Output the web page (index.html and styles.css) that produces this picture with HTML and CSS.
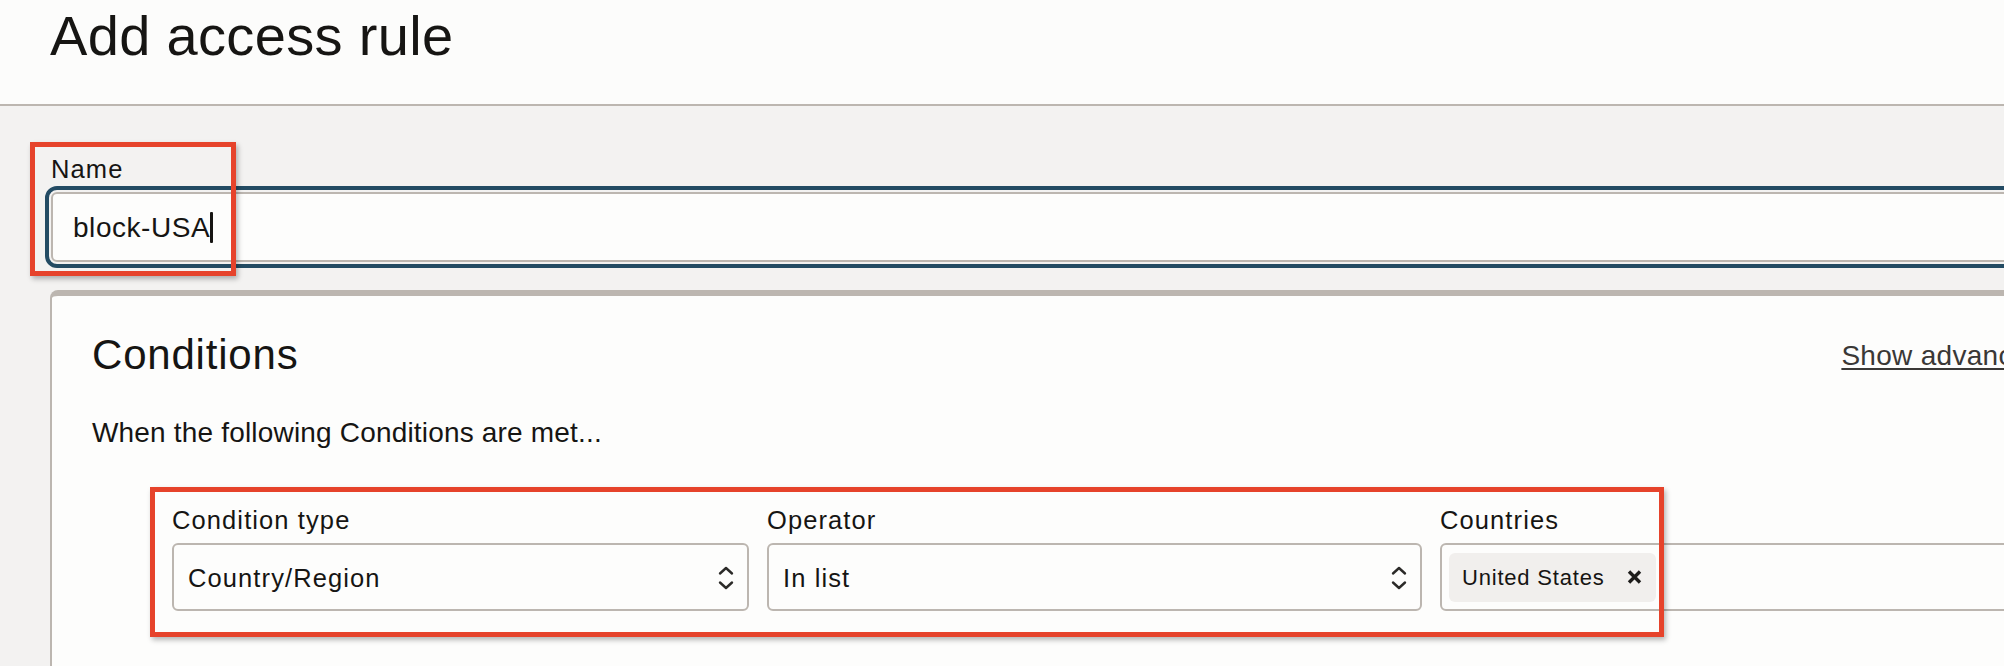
FILE: index.html
```html
<!DOCTYPE html>
<html lang="en">
<head>
<meta charset="utf-8">
<title>Add access rule</title>
<link rel="stylesheet" href="styles.css">
</head>
<body>
<div class="page">
  <header class="page-header">
    <h1 class="page-title">Add access rule</h1>
  </header>
  <main class="content">
    <div class="field name-field">
      <label class="field-label">Name</label>
      <div class="text-input is-focused"><span class="input-value">block-USA</span><span class="caret"></span></div>
    </div>

    <section class="panel">
      <div class="panel-head">
        <h2 class="panel-title">Conditions</h2>
        <a class="panel-link" href="#">Show advanced options</a>
      </div>
      <p class="panel-intro">When the following Conditions are met...</p>

      <div class="condition-row">
        <div class="field">
          <label class="field-label">Condition type</label>
          <div class="select">
            <span class="select-value">Country/Region</span>
            <svg class="select-arrows" width="16" height="24" viewBox="0 0 16 24" aria-hidden="true">
              <path d="M2 7.5 L8 2 L14 7.5" fill="none" stroke="#2b2a28" stroke-width="2.4" stroke-linecap="round" stroke-linejoin="round"/>
              <path d="M2 16.5 L8 22 L14 16.5" fill="none" stroke="#2b2a28" stroke-width="2.4" stroke-linecap="round" stroke-linejoin="round"/>
            </svg>
          </div>
        </div>
        <div class="field">
          <label class="field-label">Operator</label>
          <div class="select">
            <span class="select-value">In list</span>
            <svg class="select-arrows" width="16" height="24" viewBox="0 0 16 24" aria-hidden="true">
              <path d="M2 7.5 L8 2 L14 7.5" fill="none" stroke="#2b2a28" stroke-width="2.4" stroke-linecap="round" stroke-linejoin="round"/>
              <path d="M2 16.5 L8 22 L14 16.5" fill="none" stroke="#2b2a28" stroke-width="2.4" stroke-linecap="round" stroke-linejoin="round"/>
            </svg>
          </div>
        </div>
        <div class="field">
          <label class="field-label">Countries</label>
          <div class="chip-input">
            <span class="chip">
              <span class="chip-text">United States</span>
              <svg class="chip-close" width="15" height="14" viewBox="0 0 15 14" aria-hidden="true">
                <path d="M2 1.5 L13 12.5 M13 1.5 L2 12.5" fill="none" stroke="#1d1c1a" stroke-width="3.4" stroke-linecap="butt"/>
              </svg>
            </span>
          </div>
        </div>
      </div>
    </section>
  </main>

  <div class="callout callout-name"></div>
  <div class="callout callout-condition"></div>
</div>
</body>
</html>
```

FILE: styles.css
```css
html, body {
  margin: 0;
  padding: 0;
}

body {
  overflow: hidden;
  background: #f3f2f1;
  font-family: "Liberation Sans", Arial, sans-serif;
  color: #161513;
}

.page {
  position: relative;
  width: 2200px;
  min-height: 700px;
}

.page-header {
  height: 100px;
  padding: 4px 50px 0;
  background: #fcfcfb;
  border-bottom: 2px solid #bcb6b0;
}

.page-title {
  margin: 0;
  font-size: 56px;
  line-height: 64px;
  font-weight: 400;
  letter-spacing: 0.33px;
  color: #161513;
}

.content {
  padding: 48px 0 0 50px;
}

.name-field {
  padding-left: 1px;
}

.field {
  display: flex;
  flex-direction: column;
}

.field-label {
  font-size: 25.5px;
  line-height: 30px;
  letter-spacing: 1.1px;
  margin-bottom: 8px;
  color: #161513;
}

.text-input {
  box-sizing: border-box;
  height: 70px;
  display: flex;
  align-items: center;
  padding-left: 20px;
  background: #fdfdfc;
  border: 2px solid #bcb6b0;
  border-radius: 6px;
  font-size: 28px;
  letter-spacing: 0.55px;
}

.text-input.is-focused {
  outline: 4px solid #234b63;
  outline-offset: 2px;
}

.input-value {
  padding-top: 1px;
}

.caret {
  display: inline-block;
  width: 3px;
  height: 31px;
  background: #161513;
  border-radius: 1px;
}

.panel {
  margin-top: 28px;
  box-sizing: border-box;
  min-height: 420px;
  padding: 34px 55px 60px 40px;
  background: #fdfdfc;
  border-top: 6px solid #bcb6b0;
  border-left: 2px solid #bcb6b0;
  border-top-left-radius: 8px;
}

.panel-head {
  display: flex;
  align-items: flex-start;
  justify-content: space-between;
}

.panel-title {
  margin: 0;
  font-size: 42px;
  line-height: 50px;
  font-weight: 400;
  letter-spacing: 0.8px;
}

.panel-link {
  margin-top: 8px;
  font-size: 28px;
  line-height: 36px;
  letter-spacing: 0.3px;
  color: #3a3836;
  text-decoration: underline;
  text-decoration-thickness: 2px;
  text-underline-offset: 3px;
}

.panel-intro {
  margin: 35px 0 0;
  font-size: 28px;
  line-height: 36px;
  letter-spacing: 0.18px;
}

.condition-row {
  display: grid;
  grid-template-columns: 577px 655px 720px;
  column-gap: 18px;
  margin: 54px 0 0 80px;
}

.select {
  box-sizing: border-box;
  height: 68px;
  display: flex;
  align-items: center;
  justify-content: space-between;
  padding: 0 13px 0 14px;
  background: #fdfdfc;
  border: 2px solid #bcb6b0;
  border-radius: 6px;
}

.select-value {
  font-size: 25.5px;
  letter-spacing: 1.1px;
  padding-top: 3px;
}

.select-arrows {
  display: block;
  margin-top: 2px;
}

.chip-input {
  box-sizing: border-box;
  height: 68px;
  display: flex;
  align-items: center;
  padding-left: 7px;
  background: #fdfdfc;
  border: 2px solid #bcb6b0;
  border-radius: 6px;
}

.chip {
  box-sizing: border-box;
  height: 49px;
  width: 207px;
  display: flex;
  align-items: center;
  justify-content: space-between;
  padding: 0 14px 0 13px;
  background: #f1efed;
  border-radius: 6px;
}

.chip-text {
  font-size: 22px;
  letter-spacing: 0.8px;
  padding-top: 2px;
}

.chip-close {
  display: block;
}

.callout {
  position: absolute;
  border: 5px solid #e6432b;
  box-shadow: 2px 3px 5px rgba(0, 0, 0, 0.28);
  pointer-events: none;
}

.callout-name {
  left: 30px;
  top: 142px;
  width: 196px;
  height: 124px;
}

.callout-condition {
  left: 150px;
  top: 487px;
  width: 1504px;
  height: 140px;
}
```
